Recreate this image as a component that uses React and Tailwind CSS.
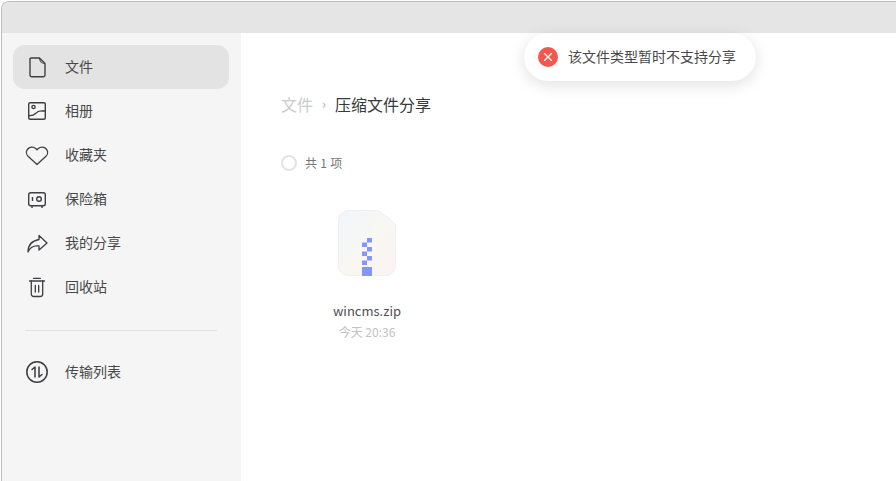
import { X } from 'lucide-react'

const FileIcon = () => (
  <svg width="24" height="24" viewBox="0 0 24 24" fill="none" stroke="#3f3f42" strokeWidth="1.4" strokeLinejoin="round">
    <path d="M6 3h8.500L20 8.500V20a1.800 1.800 0 0 1-1.800 1.800H6.800A1.800 1.800 0 0 1 5 20V4a1 1 0 0 1 1-1z" />
    <path d="M14.500 3c0 3 2 5.500 5.500 5.500" strokeWidth="1.100" />
  </svg>
)

const AlbumIcon = () => (
  <svg width="24" height="24" viewBox="0 0 24 24" fill="none" stroke="#3f3f42" strokeWidth="1.4">
    <rect x="3.700" y="3.700" width="16.600" height="16.600" rx="1.500" />
    <circle cx="8.500" cy="8" r="1.600" />
    <path d="M4 16.500c3 .5 4.500 0 6.500-2s3.500-3 7-2.500h2.500" />
  </svg>
)

const HeartIcon = () => (
  <svg width="24" height="24" viewBox="0 0 24 24" fill="none" stroke="#3f3f42" strokeWidth="1.300" strokeLinejoin="round">
    <path d="M12 21.500 3.300 13.600a5.600 5.600 0 0 1-.6-7.600 5.700 5.700 0 0 1 8-.4L12 6.800l1.300-1.200a5.700 5.700 0 0 1 8 .4 5.600 5.600 0 0 1-.6 7.600z" />
  </svg>
)

const SafeIcon = () => (
  <svg width="24" height="24" viewBox="0 0 24 24" fill="none" stroke="#3f3f42" strokeWidth="1.400">
    <rect x="3.700" y="5.700" width="16.600" height="13" rx="2" />
    <circle cx="14" cy="12" r="2.300" />
    <path d="M7.500 10v4M7 18.500v2.500M17 18.500v2.500" />
  </svg>
)

const ShareIcon = () => (
  <svg width="24" height="24" viewBox="0 0 24 24" fill="none" stroke="#3f3f42" strokeWidth="1.300" strokeLinejoin="round">
    <path d="M14 4.500l8 7.500-8 7v-4c-4.500-.5-9 1-11 6 0-6 3-11 11-12.500z" />
  </svg>
)

const TrashIcon = () => (
  <svg width="24" height="24" viewBox="0 0 24 24" fill="none" stroke="#3f3f42" strokeWidth="1.300" strokeLinecap="round">
    <path d="M4.500 6h15M8.500 3.300h7" />
    <path d="M6.300 6v13a2.500 2.500 0 0 0 2.500 2.500h6.400a2.500 2.500 0 0 0 2.500-2.500V6" />
    <path d="M10.300 10.500v6.500M13.700 10.500v6.500" />
  </svg>
)

const TransferIcon = () => (
  <svg width="24" height="24" viewBox="0 0 24 24" fill="none" stroke="#3a3a3c" strokeWidth="1.500" strokeLinecap="round" strokeLinejoin="round">
    <circle cx="12" cy="12" r="10.200" />
    <path d="M7 9.500 10 7v10" />
    <path d="M14 7v10l3-2.500" />
  </svg>
)

const ZipIcon = () => (
  <svg width="58" height="66" viewBox="0 0 58 66">
    <defs>
      <linearGradient id="zipBg" x1="0" y1="0" x2="1" y2="1">
        <stop offset="0" stopColor="#f1f6fb" />
        <stop offset="0.55" stopColor="#f8f7f2" />
        <stop offset="1" stopColor="#fbf2f1" />
      </linearGradient>
    </defs>
    <path d="M10 .5h28c2 0 3.500.5 5 2l12.500 9.500c1.500 1.500 2 3 2 5V56a9.500 9.500 0 0 1-9.500 9.500H10A9.500 9.500 0 0 1 .5 56V10A9.500 9.500 0 0 1 10 .5z" fill="url(#zipBg)" stroke="#f0eff1" />
    <g fill="#8595ff">
      <rect x="29" y="28" width="5" height="4.500" />
      <rect x="24" y="32.500" width="5" height="4.500" />
      <rect x="29" y="37" width="5" height="4.500" />
      <rect x="24" y="41.500" width="5" height="4.500" />
      <rect x="29" y="46" width="5" height="4.500" />
      <rect x="24" y="50.500" width="5" height="4.500" />
      <rect x="24" y="57" width="10" height="9" />
    </g>
  </svg>
)

const NAV = [
  { icon: FileIcon, label: '文件', active: true },
  { icon: AlbumIcon, label: '相册' },
  { icon: HeartIcon, label: '收藏夹' },
  { icon: SafeIcon, label: '保险箱' },
  { icon: ShareIcon, label: '我的分享' },
  { icon: TrashIcon, label: '回收站' },
]

function NavItem({ icon: Icon, label, active }) {
  return (
    <div className={active ? 'h-11 flex items-center gap-[16px] pl-3 rounded-xl bg-[#e3e3e4]' : 'h-11 flex items-center gap-[16px] pl-3 rounded-xl'}>
      <Icon />
      <span className="text-[14px] text-[#48484a] pb-[2px]">{label}</span>
    </div>
  )
}

export default function App() {
  return (
    <div className="relative w-[896px] h-[481px] overflow-hidden bg-white pt-px pl-px font-['Noto_Sans_CJK_SC',sans-serif]">
      <div className="w-full h-full flex flex-col border-l border-t border-[#b9bcc1] rounded-tl-lg overflow-hidden">
        {/* Title bar */}
        <div className="h-[31px] shrink-0 bg-[#e5e5e5]" />

        <div className="flex flex-1 min-h-0">
          {/* Sidebar */}
          <aside className="w-[239px] shrink-0 bg-[#f5f5f5] pt-3 pl-[11px] pr-3">
            {NAV.map((item) => (
              <NavItem key={item.label} {...item} />
            ))}
            <div className="h-px bg-[#e2e2e2] mt-[21px] mb-[19px] ml-3 mr-3" />
            <NavItem icon={TransferIcon} label="传输列表" />
          </aside>

          {/* Content */}
          <main className="flex-1 bg-white pl-10 pt-[58px]">
            <div className="flex items-center h-7 text-[16px] pb-[2px]">
              <span className="text-[#cbcbcd]">文件</span>
              <span className="ml-[9px] mr-[9px] text-[13px] text-[#aaaaac]">›</span>
              <span className="text-[#3a3a3c]">压缩文件分享</span>
            </div>

            <div className="flex items-center gap-2 mt-[32px] h-6">
              <div className="w-4 h-4 rounded-full border-2 border-[#e3e3e5]" />
              <span className="text-[12px] tracking-[0.3px] text-[#77777a]">共 1 项</span>
            </div>

            <div className="w-[172px] mt-[35px] flex flex-col items-center">
              <ZipIcon />
              <div className="mt-[25px] text-[13px] leading-5 text-[#505052]">wincms.zip</div>
              <div className="mt-[1px] text-[12px] leading-5 text-[#c2c2c4]">今天 20:36</div>
            </div>
          </main>
        </div>
      </div>

      {/* Toast */}
      <div className="absolute left-[524px] top-[33px] w-[232px] h-[48px] rounded-full bg-white shadow-[0_4px_16px_rgba(0,0,0,0.12)] flex items-center pl-[14px] gap-[10px]">
        <div className="w-5 h-5 rounded-full bg-[#f5574f] flex items-center justify-center">
          <X size={14} color="#ffffff" strokeWidth={2} />
        </div>
        <span className="text-[14px] text-[#48484a] pb-[1px]">该文件类型暂时不支持分享</span>
      </div>
    </div>
  )
}
